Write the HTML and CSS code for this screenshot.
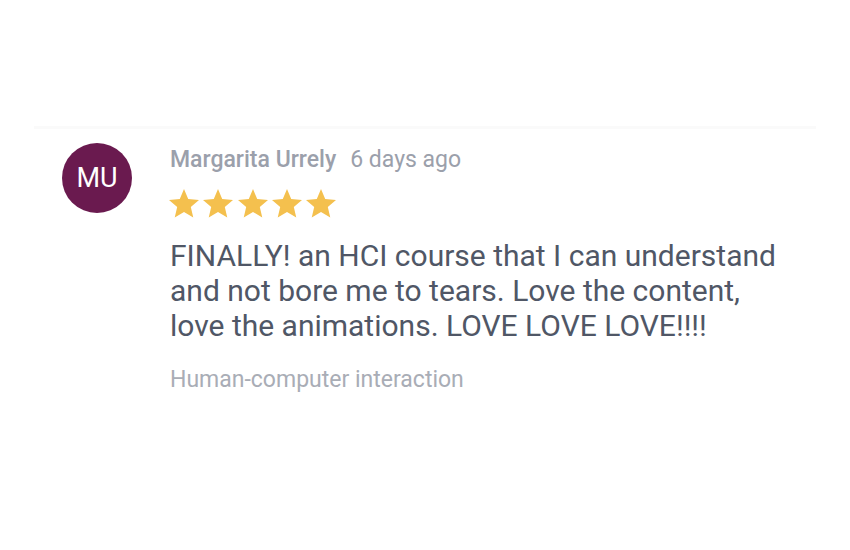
FILE: index.html
```html
<!DOCTYPE html>
<html>
<head>
<meta charset="utf-8">
<link rel="stylesheet" href="styles.css">
</head>
<body>
<div class="page">
  <div class="divider"></div>
  <div class="review">
    <div class="avatar">MU</div>
    <div class="content">
      <div class="meta">
        <span class="name">Margarita Urrely</span>
        <span class="time">6 days ago</span>
      </div>
      <div class="stars">
        <svg class="star" viewBox="2 2 20 19.27"><path d="M12 17.27L18.18 21l-1.64-7.03L22 9.24l-7.19-.61L12 2 9.19 8.63 2 9.24l5.46 4.73L5.82 21z"/></svg>
        <svg class="star" viewBox="2 2 20 19.27"><path d="M12 17.27L18.18 21l-1.64-7.03L22 9.24l-7.19-.61L12 2 9.19 8.63 2 9.24l5.46 4.73L5.82 21z"/></svg>
        <svg class="star" viewBox="2 2 20 19.27"><path d="M12 17.27L18.18 21l-1.64-7.03L22 9.24l-7.19-.61L12 2 9.19 8.63 2 9.24l5.46 4.73L5.82 21z"/></svg>
        <svg class="star" viewBox="2 2 20 19.27"><path d="M12 17.27L18.18 21l-1.64-7.03L22 9.24l-7.19-.61L12 2 9.19 8.63 2 9.24l5.46 4.73L5.82 21z"/></svg>
        <svg class="star" viewBox="2 2 20 19.27"><path d="M12 17.27L18.18 21l-1.64-7.03L22 9.24l-7.19-.61L12 2 9.19 8.63 2 9.24l5.46 4.73L5.82 21z"/></svg>
      </div>
      <p class="text">FINALLY! an HCI course that I can understand and not bore me to tears. Love the content, love the animations. LOVE LOVE LOVE!!!!</p>
      <div class="course">Human-computer interaction</div>
    </div>
  </div>
</div>
</body>
</html>
```
FILE: styles.css
```css
html, body {
  margin: 0;
  padding: 0;
  background: #ffffff;
}
body {
  font-family: Roboto, "Noto Sans", sans-serif;
  width: 850px;
  height: 550px;
  overflow: hidden;
}
.page {
  padding: 126px 34px 0 34px;
}
.divider {
  height: 3px;
  background: #fafafa;
}
.review {
  display: flex;
  gap: 38px;
  padding-top: 13px;
  padding-left: 28px;
}
.avatar {
  flex: none;
  width: 70px;
  height: 70px;
  border-radius: 50%;
  background: #6a1a4f;
  color: #ffffff;
  font-size: 27px;
  display: flex;
  align-items: center;
  justify-content: center;
  margin-top: 1px;
}
.content {
  display: flex;
  flex-direction: column;
  padding-top: 3px;
}
.meta {
  display: flex;
  gap: 14px;
  font-size: 23px;
  line-height: 30px;
  color: #9ba0ab;
}
.name {
  font-weight: 500;
}
.stars {
  display: flex;
  gap: 4.3px;
  margin-top: 14px;
  margin-left: -1px;
}
.star {
  width: 30px;
  height: 29px;
  fill: #f4c04e;
}
.text {
  margin: 20px 0 0 0;
  font-size: 30px;
  line-height: 35px;
  color: #505766;
  width: 615px;
}
.course {
  margin-top: 22px;
  font-size: 23px;
  line-height: 30px;
  color: #a9adb6;
}
```
